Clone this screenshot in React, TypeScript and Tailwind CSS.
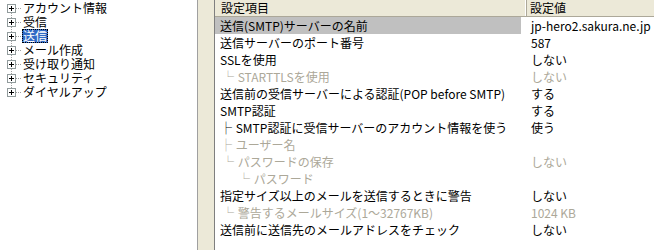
import React from "react"

type Row = { label: string; value?: string; off?: boolean; prefix?: string; indent?: number; selected?: boolean }

const treeItems = ["アカウント情報", "受信", "送信", "メール作成", "受け取り通知", "セキュリティ", "ダイヤルアップ"]

const rows: Row[] = [
    { label: "送信(SMTP)サーバーの名前", value: "jp-hero2.sakura.ne.jp", selected: true },
    { label: "送信サーバーのポート番号", value: "587" },
    { label: "SSLを使用", value: "しない" },
    { label: "STARTTLSを使用", value: "しない", off: true, prefix: "└", indent: 1 },
    { label: "送信前の受信サーバーによる認証(POP before SMTP)", value: "する" },
    { label: "SMTP認証", value: "する" },
    { label: "SMTP認証に受信サーバーのアカウント情報を使う", value: "使う", prefix: "├", indent: 0 },
    { label: "ユーザー名", off: true, prefix: "├", indent: 0 },
    { label: "パスワードの保存", value: "しない", off: true, prefix: "└", indent: 1 },
    { label: "パスワード", off: true, prefix: "└", indent: 2 },
    { label: "指定サイズ以上のメールを送信するときに警告", value: "しない" },
    { label: "警告するメールサイズ(1～32767KB)", value: "1024 KB", off: true, prefix: "└", indent: 1 },
    { label: "送信前に送信先のメールアドレスをチェック", value: "しない" },
]

function PlusBox() {
    return (
        <div className="relative w-[9px] h-[9px] border border-[#919b9c] bg-white shrink-0">
            <div className="absolute left-[1px] top-[3px] w-[5px] h-[1px] bg-black" />
            <div className="absolute left-[3px] top-[1px] w-[1px] h-[5px] bg-black" />
        </div>
    )
}

export default function App() {
    return (
        <div
            className="flex w-[654px] h-[250px] overflow-hidden bg-[#ece9d8] text-[12px] text-black"
            style={{ fontFamily: '"Noto Sans CJK JP", "Noto Sans", sans-serif' }}
        >
            {/* tree */}
            <div className="w-[198px] h-full bg-white border-r border-[#a0a0a0] pt-[1px] shrink-0">
                {treeItems.map((item, i) => (
                    <div key={item} className="relative flex items-center h-[14px] pl-[7px]">
                        {i < treeItems.length - 1 && (
                            <div className="absolute left-[11px] top-[10px] h-[9px] border-l border-dotted border-[#a0a0a0]" />
                        )}
                        <PlusBox />
                        <div className="w-[5px] border-t border-dotted border-[#a0a0a0] shrink-0" />
                        <span
                            className={`inline-block h-[14px] ml-[1px] px-[1px] leading-[14px] whitespace-nowrap ${
                                i === 2 ? "bg-[#316ac5] text-white outline-1 outline-dotted outline-[#000] -outline-offset-1" : ""
                            }`}
                        >
                            {item}
                        </span>
                    </div>
                ))}
            </div>

            {/* splitter */}
            <div className="w-[16px] h-full shrink-0" />

            {/* list */}
            <div className="flex-1 h-full bg-white border-l border-[#7f7f7f] flex flex-col">
                <div className="flex h-[17px] bg-[#ece9d8] border-b border-[#aca899] shrink-0">
                    <div className="w-[312px] pl-[6px] leading-[16px] border-r border-[#aca899] shadow-[inset_-1px_0_0_#fff]">
                        設定項目
                    </div>
                    <div className="flex-1 pl-[3px] leading-[16px]">設定値</div>
                </div>
                {rows.map(r => (
                    <div key={r.label} className="flex h-[17px] shrink-0">
                        <div
                            className={`w-[306px] pl-[5px] leading-[17px] whitespace-nowrap overflow-hidden ${
                                r.selected ? "bg-[#c0c0c0]" : ""
                            } ${r.off ? "text-[#aca899]" : ""}`}
                        >
                            {r.prefix && (
                                <span
                                    className={`inline-block w-[13px] ${
                                        r.indent === 2 ? "ml-[18px]" : r.indent === 1 ? "ml-[2px]" : "ml-0"
                                    }`}
                                >
                                    {r.prefix}
                                </span>
                            )}
                            {r.prefix && " "}
                            {r.label}
                        </div>
                        <div
                            className={`flex-1 pl-[10px] leading-[17px] whitespace-nowrap ${
                                r.off ? "text-[#aca899]" : ""
                            }`}
                        >
                            {r.value}
                        </div>
                    </div>
                ))}
            </div>
        </div>
    )
}
